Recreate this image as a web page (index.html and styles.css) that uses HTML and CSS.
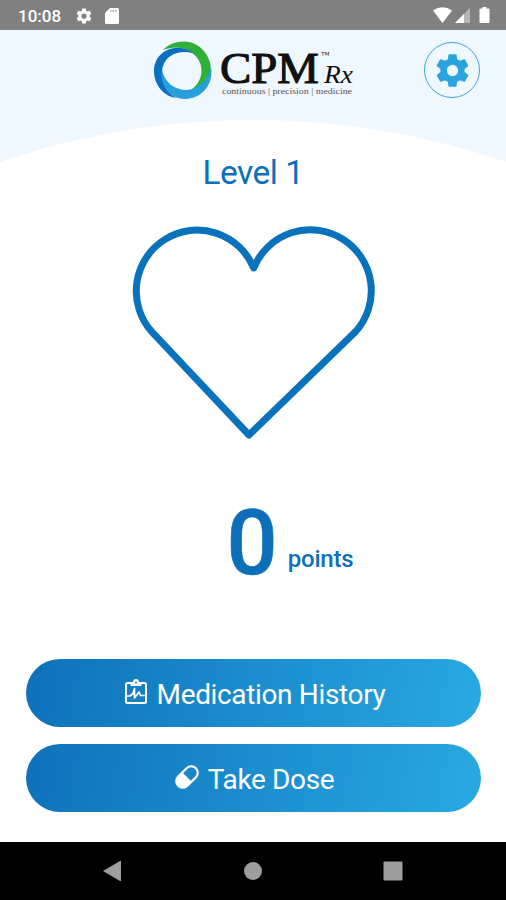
FILE: index.html
```html
<!DOCTYPE html>
<html lang="en">
<head>
  <meta charset="UTF-8">
  <meta name="viewport" content="width=device-width, initial-scale=1.0">
  <title>CPM Rx</title>
  <link rel="stylesheet" href="styles.css">
</head>
<body>
  <div class="status-bar">
    <span class="clock">10:08</span>
    <svg class="status-gear" width="18" height="18" viewBox="0 0 24 24"><path fill="#fff" d="M19.43 12.98c.04-.32.07-.64.07-.98s-.03-.66-.07-.98l2.11-1.65c.19-.15.24-.42.12-.64l-2-3.46c-.12-.22-.39-.3-.61-.22l-2.49 1c-.52-.4-1.08-.73-1.69-.98l-.38-2.65C14.46 2.18 14.25 2 14 2h-4c-.25 0-.46.18-.49.42l-.38 2.65c-.61.25-1.17.59-1.69.98l-2.49-1c-.23-.09-.49 0-.61.22l-2 3.46c-.13.22-.07.49.12.64l2.11 1.65c-.04.32-.07.65-.07.98s.03.66.07.98l-2.11 1.65c-.19.15-.24.42-.12.64l2 3.46c.12.22.39.3.61.22l2.49-1c.52.4 1.08.73 1.69.98l.38 2.65c.03.24.24.42.49.42h4c.25 0 .46-.18.49-.42l.38-2.65c.61-.25 1.17-.59 1.69-.98l2.49 1c.23.09.49 0 .61-.22l2-3.46c.12-.22.07-.49-.12-.64zM12 15.5a3.5 3.5 0 1 1 0-7 3.5 3.5 0 0 1 0 7z"/></svg>
    <svg class="status-card" width="14" height="16" viewBox="0 0 14 16"><path fill="#fff" d="M5 0h7.5Q14 0 14 1.5v13Q14 16 12.5 16h-11Q0 16 0 14.5V5z"/><path stroke="#b0b0b0" stroke-width="1.3" d="M5.7 2v2M8.3 2v2M10.9 2v2"/></svg>
    <svg class="status-right" width="57" height="17" viewBox="0 0 57 17">
      <path fill="#fff" d="M0 3.5Q9.5-3 19 3.5L9.5 16z"/>
      <path fill="#b5b5b5" d="M22 16 37 1v15z"/>
      <path fill="#fff" d="M22 16l9-9v9z"/>
      <path fill="#fff" d="M49.5 0h4v1.5h2q1 0 1 1V15q0 1-1 1h-8q-1 0-1-1V2.5q0-1 1-1h2z"/>
    </svg>
  </div>

  <header class="header">
    <svg class="logo" width="202" height="62" viewBox="0 0 202 62">
      <!-- ring -->
      <path fill="#2fb03a" d="M9 9C20-2 38-2 48 8C60 20 59 37 50 44C46 47 43 48 37 49C47 42 51 29 44 18C36 6 22 4 9 9z"/>
      <path fill="#0b6fc0" d="M41 13C27 8 13 13 9 25C5 38 12 50 22 57C9 55 0 43 0 30C0 10 23-1 41 13z"/>
      <path fill="#279fdb" d="M8 28C10 41 20 49 33 49C45 48 54 39 57 26C60 44 47 58 31 58C15 58 5 43 8 28z"/>
      <text class="logo-cpm" x="66" y="42" textLength="99" lengthAdjust="spacingAndGlyphs">CPM</text>
      <text class="logo-tm" x="167" y="17" textLength="9" lengthAdjust="spacingAndGlyphs">™</text>
      <text class="logo-rx" x="170" y="42" textLength="29" lengthAdjust="spacingAndGlyphs">Rx</text>
      <text class="logo-tagline" x="68" y="53" textLength="130" lengthAdjust="spacingAndGlyphs">continuous | precision | medicine</text>
    </svg>
    <button class="settings" aria-label="Settings">
      <svg width="39" height="39" viewBox="0 0 24 24"><path fill="#29a4df" d="M19.43 12.98c.04-.32.07-.64.07-.98s-.03-.66-.07-.98l2.11-1.65c.19-.15.24-.42.12-.64l-2-3.46c-.12-.22-.39-.3-.61-.22l-2.49 1c-.52-.4-1.08-.73-1.69-.98l-.38-2.65C14.46 2.18 14.25 2 14 2h-4c-.25 0-.46.18-.49.42l-.38 2.65c-.61.25-1.17.59-1.69.98l-2.49-1c-.23-.09-.49 0-.61.22l-2 3.46c-.13.22-.07.49.12.64l2.11 1.65c-.04.32-.07.65-.07.98s.03.66.07.98l-2.11 1.65c-.19.15-.24.42-.12.64l2 3.46c.12.22.39.3.61.22l2.49-1c.52.4 1.08.73 1.69.98l.38 2.65c.03.24.24.42.49.42h4c.25 0 .46-.18.49-.42l.38-2.65c.61-.25 1.17-.59 1.69-.98l2.49 1c.23.09.49 0 .61-.22l2-3.46c.12-.22.07-.49-.12-.64zM12 15.5a3.5 3.5 0 1 1 0-7 3.5 3.5 0 0 1 0 7z"/></svg>
    </button>
  </header>

  <main class="content">
    <h1 class="level">Level 1</h1>
    <svg class="heart" width="242" height="213" viewBox="133 226 242 213">
      <path d="M249 435 151.7 331.7A61 61 0 1 1 253.7 268A61 61 0 1 1 355.7 331.5z"/>
    </svg>
    <div class="score">
      <span class="score-value">0</span>
      <span class="score-unit">points</span>
    </div>
    <div class="actions">
      <button class="action">
        <svg width="24" height="26" viewBox="0 0 24 26" fill="none" stroke="#fff" stroke-width="2">
          <rect x="2" y="4" width="20" height="20" rx="1.5"/>
          <path fill="#fff" stroke="none" d="M6.5 3H9a3 3 0 0 1 6 0h2.5v4h-11z"/>
          <circle cx="12" cy="3.6" r="1" fill="#1580c5" stroke="none"/>
          <path stroke-width="1.7" stroke-linejoin="round" d="M2 17h4l3-2.500 1.500-5V19l4.500-6 1.500 3.500H22"/>
        </svg>
        <span>Medication History</span>
      </button>
      <button class="action">
        <svg width="24" height="24" viewBox="0 0 24 24">
          <g transform="rotate(-45 12 12)">
            <rect x="-0.5" y="5.5" width="25" height="13" rx="6.5" fill="none" stroke="#fff" stroke-width="2.2"/>
            <path fill="#fff" d="M12 5.5v13H6A6.5 6.5 0 0 1 6 5.5z"/>
          </g>
        </svg>
        <span>Take Dose</span>
      </button>
    </div>
  </main>

  <nav class="nav-bar">
    <svg width="20" height="22" viewBox="0 0 20 22"><path fill="#9e9e9e" d="M0 11 17 1q1-.5 1 .5v19q0 1-1 .5z"/></svg>
    <svg width="20" height="22" viewBox="0 0 20 22"><circle cx="10" cy="11" r="9" fill="#9e9e9e"/></svg>
    <svg width="20" height="22" viewBox="0 0 20 22"><rect x=".5" y="1.5" width="19" height="19" rx="1" fill="#9e9e9e"/></svg>
  </nav>
</body>
</html>
```
FILE: styles.css
```css
* { box-sizing: border-box; }
html, body { margin: 0; padding: 0; }
body {
  display: flex;
  flex-direction: column;
  height: 900px;
  font-family: Roboto, "Liberation Sans", sans-serif;
  background: #fff;
  color: #0d6fb9;
  overflow: hidden;
}
svg { display: block; flex-shrink: 0; overflow: visible; }
button { font: inherit; margin: 0; padding: 0; cursor: pointer; }

.status-bar {
  display: flex;
  align-items: center;
  height: 30px;
  padding: 1px 16px 0 18px;
  background: #808080;
  color: #fff;
}
.clock { font-size: 17px; font-weight: 500; width: 57px; }
.status-gear { margin-right: 12px; }
.status-right { margin-left: auto; }

/* light blue header, cut by a large white circle */
.header {
  display: flex;
  justify-content: space-between;
  align-items: flex-start;
  height: 133px;
  padding: 11px 26px 0 154px;
  background: radial-gradient(circle at 50% 873px, #fff 782.5px, #f0f8ff 783.5px);
}
.logo text { font-family: "Liberation Serif", serif; fill: #111; }
.logo .logo-cpm { font-size: 44px; stroke: #111; stroke-width: 1.1px; }
.logo .logo-tm { font-size: 9px; }
.logo .logo-rx { font-size: 25px; font-style: italic; }
.logo .logo-tagline { font-size: 8.5px; fill: #555; }
.settings {
  display: flex;
  justify-content: center;
  align-items: center;
  width: 56px;
  height: 56px;
  margin-top: 1px;
  border: 1px solid #3aa5dc;
  border-radius: 50%;
  background: none;
}

.content {
  display: flex;
  flex-direction: column;
  align-items: center;
  flex: 1;
}
.level {
  margin: -11px 0 0;
  font-size: 33.5px;
  line-height: 42px;
  font-weight: 400;
  letter-spacing: -0.5px;
}
.heart { margin: 32px 0 0 2px; }
.heart path {
  fill: none;
  stroke: #0872bd;
  stroke-width: 7;
  stroke-linejoin: round;
}
.score {
  display: flex;
  align-items: flex-end;
  gap: 10px;
  height: 106px;
  margin: 52px 0 0 74px;
}
.score-value {
  font-size: 90px;
  line-height: 106px;
  font-weight: 500;
  -webkit-text-stroke: 0.6px #0d6fb9;
}
.score-unit { padding-bottom: 24px; font-size: 24px; line-height: 28px; font-weight: 500; letter-spacing: -0.2px; }

.actions {
  display: flex;
  flex-direction: column;
  gap: 17px;
  width: 100%;
  padding: 0 25px 0 26px;
  margin-top: 62px;
}
.action {
  display: flex;
  justify-content: center;
  align-items: center;
  gap: 9px;
  height: 68px;
  padding: 3px 0 0 2px;
  border: 0;
  border-radius: 34px;
  background: linear-gradient(100deg, #0e71ba, #29a9e1);
  color: #fff;
  font-size: 28px;
  letter-spacing: -0.35px;
}
.action svg { margin-top: -6px; }

.nav-bar {
  display: flex;
  justify-content: space-between;
  align-items: center;
  height: 58px;
  padding: 0 103px;
  background: #000;
}
```
